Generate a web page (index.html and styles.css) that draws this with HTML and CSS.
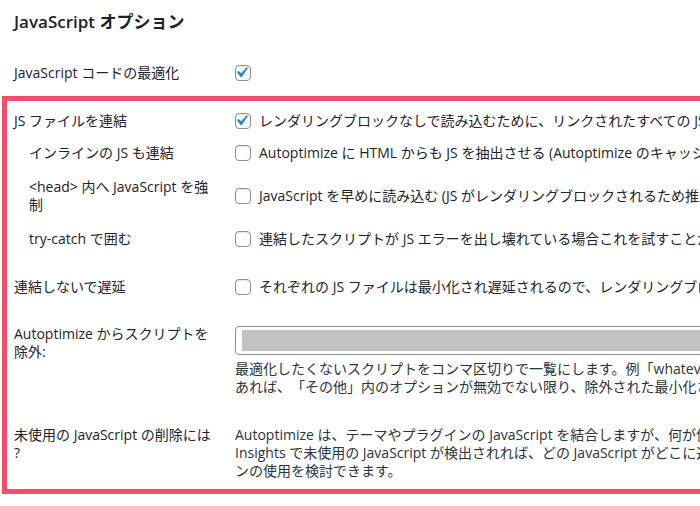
FILE: index.html
```html
<!DOCTYPE html>
<html lang="ja">
<head>
<meta charset="utf-8">
<title>JavaScript オプション</title>
<link rel="stylesheet" href="styles.css">
</head>
<body>
<div class="page">
  <h2 class="title">JavaScript オプション</h2>

  <div class="row row-top">
    <div class="label">JavaScript コードの最適化</div>
    <div class="field">
      <span class="cb"><svg class="tick" viewBox="0 0 20 20"><path d="M14.83 4.89l1.34.94-5.81 8.38H9.02L5.78 9.67l1.34-1.25 2.57 2.4z"/></svg></span>
    </div>
  </div>

  <div class="box">
    <div class="row r-a">
      <div class="label">JS ファイルを連結</div>
      <div class="field">
        <span class="cb"><svg class="tick" viewBox="0 0 20 20"><path d="M14.83 4.89l1.34.94-5.81 8.38H9.02L5.78 9.67l1.34-1.25 2.57 2.4z"/></svg></span>
        <span class="text">レンダリングブロックなしで読み込むために、リンクされたすべての JS ファイルを連結し最適化して、フッターに移動します。</span>
      </div>
    </div>

    <div class="row r-b">
      <div class="label sub">インラインの JS も連結</div>
      <div class="field">
        <span class="cb"></span>
        <span class="text">Autoptimize に HTML からも JS を抽出させる (Autoptimize のキャッシュサイズが大きくなる可能性があります)</span>
      </div>
    </div>

    <div class="row r-c">
      <div class="label sub">&lt;head&gt; 内へ JavaScript を強<br>制</div>
      <div class="field">
        <span class="cb"></span>
        <span class="text">JavaScript を早めに読み込む (JS がレンダリングブロックされるため推奨されません)</span>
      </div>
    </div>

    <div class="row r-d">
      <div class="label sub">try-catch で囲む</div>
      <div class="field">
        <span class="cb"></span>
        <span class="text">連結したスクリプトが JS エラーを出し壊れている場合これを試すことができます。</span>
      </div>
    </div>

    <div class="row r-e">
      <div class="label">連結しないで遅延</div>
      <div class="field">
        <span class="cb"></span>
        <span class="text">それぞれの JS ファイルは最小化され遅延されるので、レンダリングブロックされません。</span>
      </div>
    </div>

    <div class="row r-f">
      <div class="label">Autoptimize からスクリプトを<br>除外:</div>
      <div class="stack">
        <div class="input"><div class="redact"></div></div>
        <p class="desc">最適化したくないスクリプトをコンマ区切りで一覧にします。例「whatever.js, another/js/file.js」。除外するファイルが最小化されていない場合で<br>あれば、「その他」内のオプションが無効でない限り、除外された最小化されていないファイルは最小化されます。</p>
      </div>
    </div>

    <div class="row r-g">
      <div class="label">未使用の JavaScript の削除には<br>?</div>
      <div class="stack">
        <p class="desc">Autoptimize は、テーマやプラグインの JavaScript を結合しますが、何が使われているかはわかりません。PageSpeed<br>Insights で未使用の JavaScript が検出されれば、どの JavaScript がどこに追加されるかを管理するために、プラグイ<br>ンの使用を検討できます。</p>
      </div>
    </div>
  </div>
</div>
</body>
</html>
```

FILE: styles.css
```css
html, body {
  margin: 0;
  padding: 0;
  background: #ffffff;
  overflow: hidden;
}

body {
  width: 700px;
  height: 506px;
  font-family: "Open Sans", "Noto Sans CJK JP", sans-serif;
  font-size: 14px;
  line-height: 18px;
  color: #1d2327;
  text-spacing-trim: space-all;
}

.title {
  margin: 0;
  padding: 10px 0 0 14px;
  font-size: 17px;
  line-height: 24px;
  font-weight: 600;
  white-space: nowrap;
}

.row {
  display: grid;
  grid-template-columns: 221px 1fr;
  align-items: center;
}

.row-top {
  margin-top: 30px;
  padding-left: 14px;
}

.label {
  white-space: nowrap;
}

.label.sub {
  padding-left: 15px;
}

.field {
  display: flex;
  align-items: center;
  gap: 8px;
  white-space: nowrap;
}

.cb {
  flex: none;
  display: block;
  box-sizing: border-box;
  width: 16px;
  height: 16px;
  border: 1px solid #8c8f94;
  border-radius: 4px;
  background: #fff;
  box-shadow: inset 0 1px 2px rgba(0, 0, 0, 0.1);
}

.tick {
  display: block;
  width: 21px;
  height: 21px;
  margin: -4px 0 0 -5px;
  fill: #3582c4;
}

.box {
  margin: 14px 0 0 2px;
  width: 1400px;
  border: 5px solid #f24e6b;
  border-right: none;
  padding: 11px 0 9px 7px;
}

.r-b { margin-top: 14px; }
.r-c { margin-top: 16px; }
.r-d { margin-top: 16px; }
.r-e { margin-top: 30px; }
.r-f { margin-top: 29px; align-items: start; }
.r-g { margin-top: 30px; align-items: start; }

.stack {
  white-space: nowrap;
}

.r-f .input {
  margin-top: 1px;
}

.input {
  box-sizing: border-box;
  width: 1000px;
  height: 29px;
  border: 1px solid #8c8f94;
  border-radius: 4px;
  padding: 3px 0 3px 6px;
  background: #fff;
}

.redact {
  height: 21px;
  background: #c2c2c2;
}

.desc {
  margin: 5px 0 0;
  color: #2c3338;
}

.r-g .desc {
  margin-top: 0;
}
```
